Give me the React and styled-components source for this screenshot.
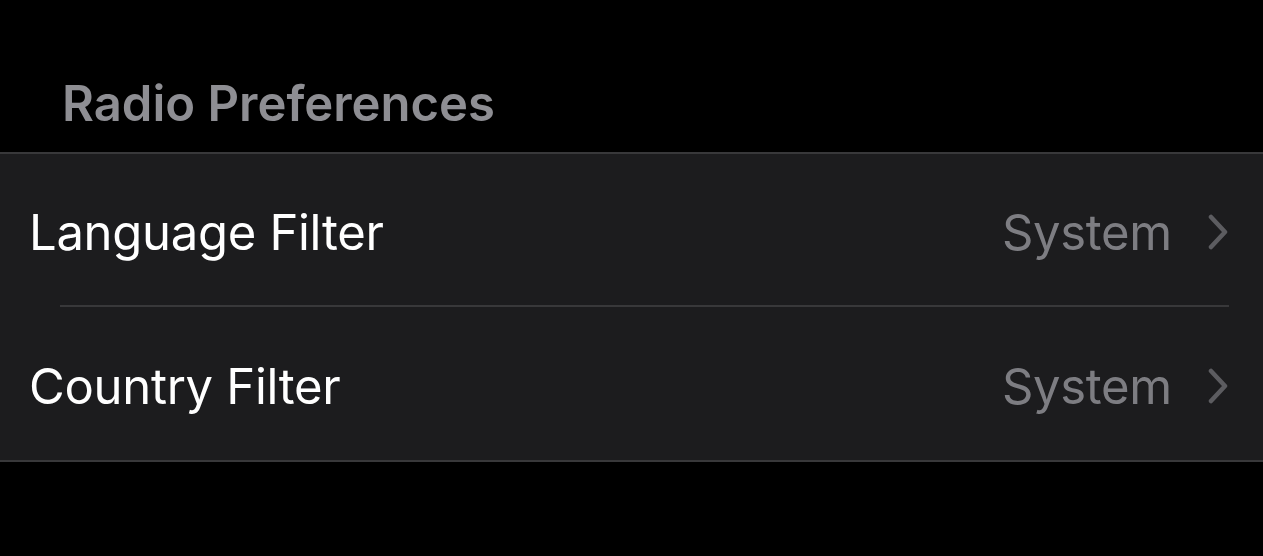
import React from "react";
import styled, { createGlobalStyle } from "styled-components";

const GlobalStyle = createGlobalStyle`
html, body {
margin: 0;
padding: 0;
background: #000;
}
body {
font-family: Inter, "Noto Sans", "Liberation Sans", sans-serif;
-webkit-font-smoothing: antialiased;
}
`;

const Screen = styled.div`
width: 1263px;
height: 556px;
background: #000;
overflow: hidden;
`;

const SectionHeader = styled.div`
box-sizing: border-box;
height: 152px;
padding: 75px 0 0 62px;
font-size: 49px;
font-weight: 600;
color: #8e8e93;
line-height: 58px;
`;

const Group = styled.div`
background: #1c1c1e;
border-top: 2px solid #38383a;
border-bottom: 2px solid #38383a;
`;

const Row = styled.div`
box-sizing: border-box;
display: flex;
align-items: center;
height: ${props => props.tall ? '153px' : '151px'};
padding: 5px 34px 0 29px;
`;

const Divider = styled.div`
height: 2px;
margin: 0 34px 0 60px;
background: #38383a;
`;

const Label = styled.div`
flex: 1;
font-size: 49px;
letter-spacing: -0.3px;
color: #fff;
`;

const Value = styled.div`
font-size: 49px;
letter-spacing: -0.3px;
color: #7d7d82;
margin-right: 35px;
`;

const Chevron = () => (
  <svg width="22" height="36" viewBox="0 0 22 36">
    <path d="M4 3 L18 18 L4 33" fill="none" stroke="#5c5c60" strokeWidth="4.5" strokeLinecap="round" strokeLinejoin="round" />
  </svg>
);

const rows = [
  { label: "Language Filter", value: "System" },
  { label: "Country Filter", value: "System" },
];

export default function App() {
  return (
    <Screen>
      <GlobalStyle />
      <SectionHeader>Radio Preferences</SectionHeader>
      <Group>
        {rows.map((r, i) => (
          <React.Fragment key={r.label}>
            {i > 0 && <Divider />}
            <Row tall={i > 0}>
              <Label>{r.label}</Label>
              <Value>{r.value}</Value>
              <Chevron />
            </Row>
          </React.Fragment>
        ))}
      </Group>
    </Screen>
  );
}
